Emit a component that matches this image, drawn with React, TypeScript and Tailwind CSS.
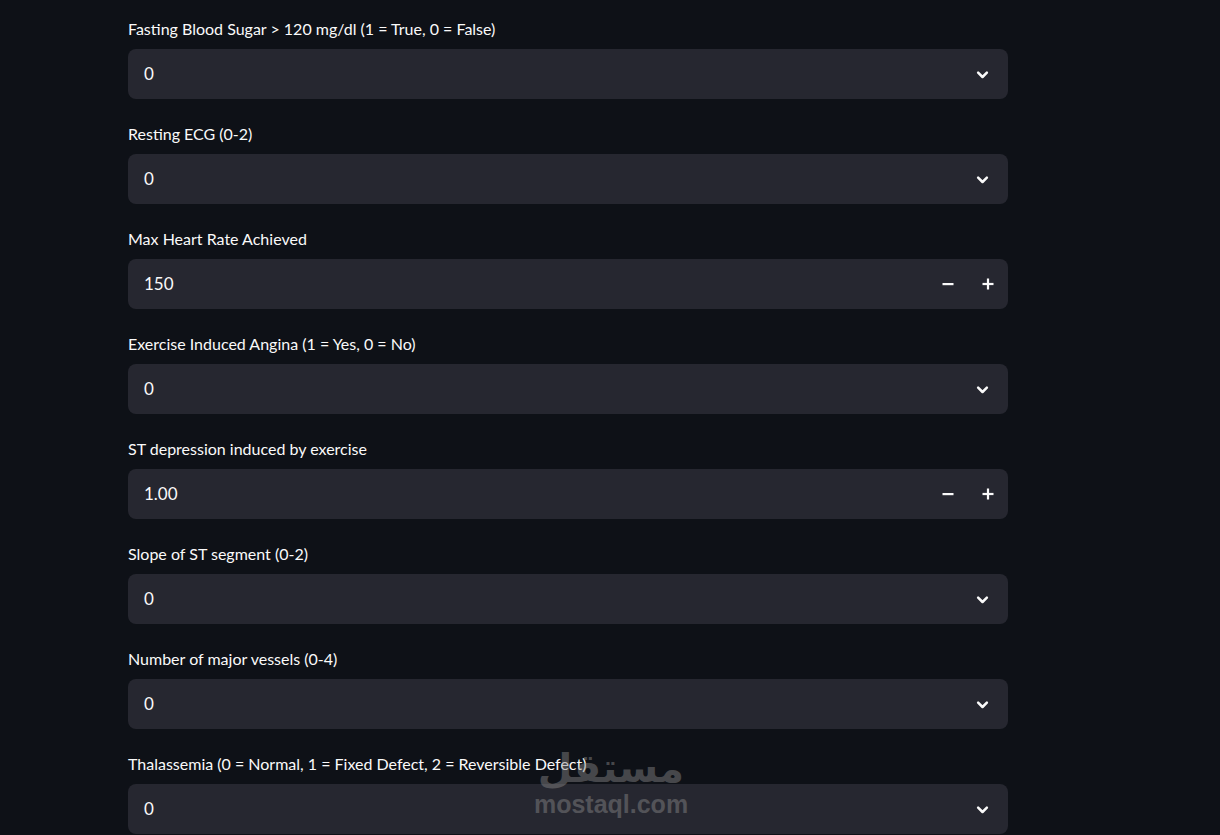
import React from "react";

type Field = { label: string; value: string; kind: "select" | "number" };

const fields: Field[] = [
  { label: "Fasting Blood Sugar > 120 mg/dl (1 = True, 0 = False)", value: "0", kind: "select" },
  { label: "Resting ECG (0-2)", value: "0", kind: "select" },
  { label: "Max Heart Rate Achieved", value: "150", kind: "number" },
  { label: "Exercise Induced Angina (1 = Yes, 0 = No)", value: "0", kind: "select" },
  { label: "ST depression induced by exercise", value: "1.00", kind: "number" },
  { label: "Slope of ST segment (0-2)", value: "0", kind: "select" },
  { label: "Number of major vessels (0-4)", value: "0", kind: "select" },
  { label: "Thalassemia (0 = Normal, 1 = Fixed Defect, 2 = Reversible Defect)", value: "0", kind: "select" },
];

const Chevron = () => (
  <svg width="15" height="15" viewBox="0 0 24 24" fill="none" stroke="#fafafa" strokeWidth="4" strokeLinecap="round" strokeLinejoin="round">
    <path d="M5 9l7 7 7-7" />
  </svg>
);

const Stepper = () => (
  <div className="flex items-center h-full">
    <button className="w-10 h-full flex items-center justify-center">
      <svg width="12" height="12" viewBox="0 0 12 12">
        <rect x="0.5" y="5" width="11" height="2.2" fill="#fafafa" />
      </svg>
    </button>
    <button className="w-10 h-full flex items-center justify-center">
      <svg width="12" height="12" viewBox="0 0 12 12">
        <rect x="0.5" y="4.9" width="11" height="2.2" fill="#fafafa" />
        <rect x="4.9" y="0.5" width="2.2" height="11" fill="#fafafa" />
      </svg>
    </button>
  </div>
);

const FieldRow = ({ field }: { field: Field }) => (
  <div className="pt-[17px] pb-[6px]">
    <div className="h-6 flex items-center text-[16px] text-[#fafafa] leading-6 mb-2">{field.label}</div>
    <div className="h-[50px] rounded-lg bg-[#262730] flex items-center justify-between pl-4 text-[17px] text-[#fafafa]">
      <span>{field.value}</span>
      {field.kind === "select" ? (
        <div className="pr-[18px] flex items-center">
          <Chevron />
        </div>
      ) : (
        <Stepper />
      )}
    </div>
  </div>
);

export default function App() {
  return (
    <div
      className="relative w-[1220px] h-[835px] overflow-hidden bg-[#0e1117]"
      style={{ fontFamily: '"Source Sans Pro", "Lato", "Noto Sans", sans-serif' }}
    >
      <div className="ml-[128px] w-[880px]">
        {fields.map((f, i) => (
          <FieldRow key={i} field={f} />
        ))}
      </div>
      <div className="absolute left-[536px] top-[746px] w-[150px] flex flex-col items-center pointer-events-none opacity-45">
        <span
          className="text-[40px] font-bold leading-[44px] text-[#8a8a8a]"
          style={{ fontFamily: '"DejaVu Sans", "Noto Sans", sans-serif' }}
          dir="rtl"
        >
          مستقل
        </span>
        <span className="text-[25px] font-bold leading-[28px] text-[#8a8a8a]" style={{ fontFamily: '"Liberation Sans", Arial, sans-serif' }}>
          mostaql.com
        </span>
      </div>
    </div>
  );
}
